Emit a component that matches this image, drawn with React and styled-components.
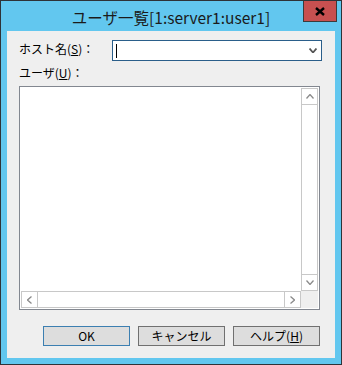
import React from "react";
import styled, { createGlobalStyle } from "styled-components";

const Global = createGlobalStyle`
  html, body { margin: 0; padding: 0; background: #ffffff; }
  body { font-family: "Noto Sans CJK JP", "Liberation Sans", sans-serif; }
`;

const Window = styled.div`
  width: 342px;
  height: 365px;
  box-sizing: border-box;
  border: 1px solid #2e3338;
  background: #62c7ef;
  display: flex;
  flex-direction: column;
  padding: 0 6px 6px 6px;
`;

const TitleBar = styled.div`
  height: 30px;
  display: grid;
  grid-template-columns: 1fr auto 1fr;
  align-items: start;
  margin: 0 -6px;
`;

const Title = styled.div`
  grid-column: 2;
  font-size: 15.5px;
  line-height: 20px;
  padding-top: 6px;
  color: #1b1b1b;
  white-space: nowrap;
`;

const CloseButton = styled.div`
  grid-column: 3;
  justify-self: end;
  margin-right: 4px;
  width: 34px;
  height: 21px;
  box-sizing: border-box;
  border: 1px solid #3b3b3b;
  border-top: none;
  background: #c75050;
  display: flex;
  align-items: center;
  justify-content: center;
`;

const Content = styled.div`
  flex: 1;
  background: #efefef;
  display: flex;
  flex-direction: column;
  padding: 9px 13px 11px 12px;
  font-size: 12px;
  color: #000;
`;

const Row = styled.div`
  display: flex;
  align-items: flex-start;
  height: 21px;
`;

const Label = styled.div`
  width: 93px;
  line-height: 16px;
  padding-top: ${(p) => p.$top || 0}px;
  margin-top: ${(p) => p.$mt || 0}px;
  white-space: nowrap;
`;

const Combo = styled.div`
  flex: 1;
  height: 21px;
  box-sizing: border-box;
  border: 1px solid #2a5e8a;
  background: #fff;
  display: flex;
  align-items: center;
  padding: 0 4px 0 3px;
`;

const Caret = styled.div`
  width: 1px;
  height: 14px;
  background: #000;
  margin-right: auto;
`;

const ListBox = styled.div`
  height: 224px;
  width: 301px;
  box-sizing: border-box;
  margin-top: 5px;
  border: 1px solid #828790;
  padding: 1px;
  background: #fff;
  display: grid;
  grid-template-columns: 1fr 17px;
  grid-template-rows: 1fr 17px;
`;

const VScroll = styled.div`
  display: flex;
  flex-direction: column;
  border: 1px solid #c8c8c8;
  border-top: none;
  border-bottom: none;
  box-sizing: border-box;
`;

const HScroll = styled.div`
  display: flex;
  border: 1px solid #c8c8c8;
  border-left: none;
  border-right: none;
  box-sizing: border-box;
`;

const ArrowBox = styled.div`
  ${(p) => (p.$v ? "height: 17px;" : "width: 17px;")}
  box-sizing: border-box;
  display: flex;
  align-items: center;
  justify-content: center;
  border: 1px solid #c8c8c8;
  ${(p) => (p.$v ? "border-left: none; border-right: none;" : "border-top: none; border-bottom: none;")}
`;

const Track = styled.div`
  flex: 1;
`;

const Corner = styled.div`
  background: #efefef;
`;

const Buttons = styled.div`
  display: flex;
  justify-content: flex-end;
  gap: 8px;
  margin-top: 16px;
  margin-right: 2px;
`;

const Button = styled.div`
  width: 87px;
  height: 20px;
  box-sizing: border-box;
  border: 1px solid ${(p) => (p.$default ? "#3c7fb1" : "#707070")};
  background: #dddddd;
  display: flex;
  align-items: center;
  justify-content: center;
  font-size: 12px;
  line-height: 16px;
`;

const Chevron = ({ dir, color = "#8a8a8a", w = 8, h = 5, sw = 1.3 }) => {
  const pts = {
    down: `0.5,0.5 ${w / 2},${h - 0.5} ${w - 0.5},0.5`,
    up: `0.5,${h - 0.5} ${w / 2},0.5 ${w - 0.5},${h - 0.5}`,
  };
  if (dir === "left" || dir === "right") {
    const p =
      dir === "left"
        ? `${h - 0.5},0.5 0.5,${w / 2} ${h - 0.5},${w - 0.5}`
        : `0.5,0.5 ${h - 0.5},${w / 2} 0.5,${w - 0.5}`;
    return (
      <svg width={h} height={w} viewBox={`0 0 ${h} ${w}`}>
        <polyline points={p} fill="none" stroke={color} strokeWidth={sw} />
      </svg>
    );
  }
  return (
    <svg width={w} height={h} viewBox={`0 0 ${w} ${h}`}>
      <polyline points={pts[dir]} fill="none" stroke={color} strokeWidth={sw} />
    </svg>
  );
};

export default function App() {
  return (
    <>
      <Global />
      <Window>
        <TitleBar>
          <Title>ユーザ一覧[1:server1:user1]</Title>
          <CloseButton>
            <svg width="10" height="9" viewBox="0 0 10 9">
              <path d="M1 1 L9 8 M9 1 L1 8" stroke="#000" strokeWidth="2.4" />
            </svg>
          </CloseButton>
        </TitleBar>
        <Content>
          <Row>
            <Label $top={1}>
              ホスト名(<u>S</u>)：
            </Label>
            <Combo>
              <Caret />
              <Chevron dir="down" color="#555" w={8} h={5} sw={1.8} />
            </Combo>
          </Row>
          <Label $mt={4}>
            ユーザ(<u>U</u>)：
          </Label>
          <ListBox>
            <div />
            <VScroll>
              <ArrowBox $v>
                <Chevron dir="up" />
              </ArrowBox>
              <Track />
              <ArrowBox $v>
                <Chevron dir="down" />
              </ArrowBox>
            </VScroll>
            <HScroll>
              <ArrowBox>
                <Chevron dir="left" />
              </ArrowBox>
              <Track />
              <ArrowBox>
                <Chevron dir="right" />
              </ArrowBox>
            </HScroll>
            <Corner />
          </ListBox>
          <Buttons>
            <Button $default>OK</Button>
            <Button>キャンセル</Button>
            <Button>
              ヘルプ(<u>H</u>)
            </Button>
          </Buttons>
        </Content>
      </Window>
    </>
  );
}
